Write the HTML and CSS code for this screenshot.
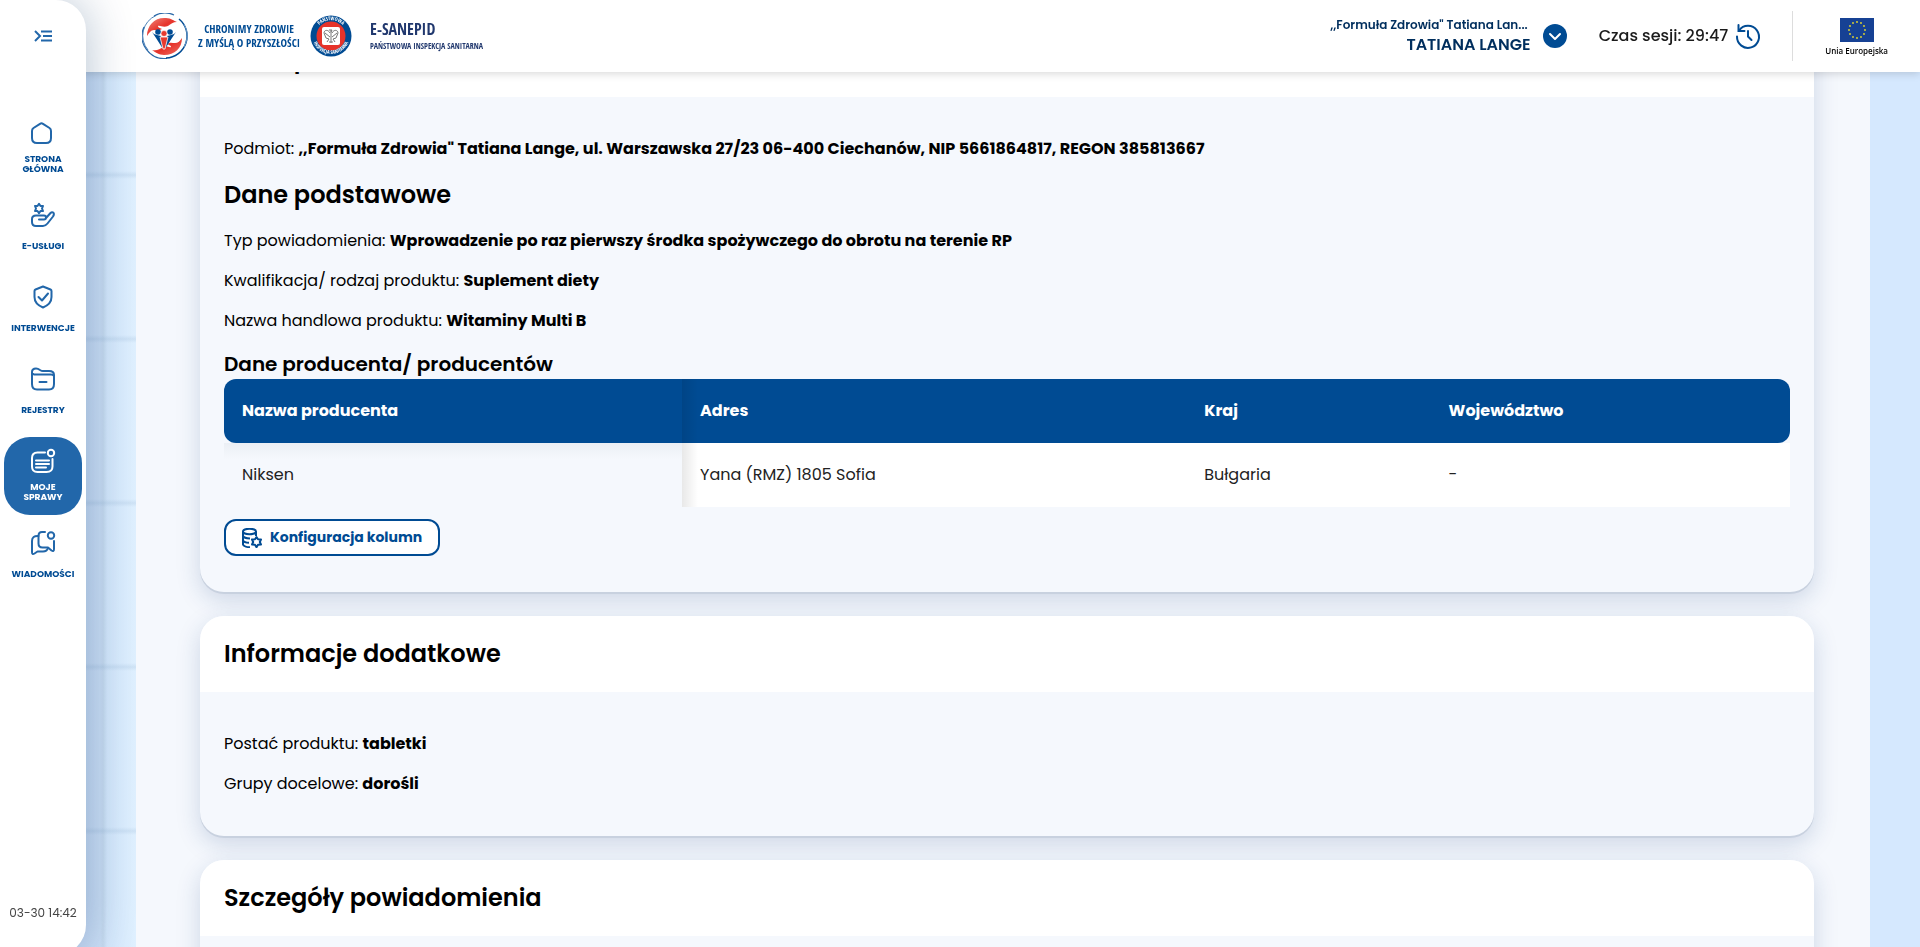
FILE: index.html
```html
<!DOCTYPE html>
<html lang="pl">

<head>
    <meta charset="UTF-8">
    <meta name="viewport" content="width=device-width, initial-scale=1.0">
    <title>E-SANEPID</title>
    <link rel="stylesheet" href="styles.css">
</head>

<body>
    <header class="topbar">
        <div class="brand">
            <svg class="brand-hands" viewBox="0 0 46 46" aria-hidden="true">
                <defs>
                    <linearGradient id="hand" x1="0" y1="0" x2="1" y2="1">
                        <stop offset="0" stop-color="#f08a80" />
                        <stop offset=".5" stop-color="#e6332a" />
                        <stop offset="1" stop-color="#ee7066" />
                    </linearGradient>
                </defs>
                <path d="M14 2.500A22 22 0 0 0 6 37" fill="none" stroke="#4d82b8" stroke-width="1" />
                <path d="M2 14A22.500 22.500 0 0 0 25 45.500" fill="none" stroke="#2b69a8" stroke-width="1.200" />
                <path d="M12 3A22 22 0 0 1 32 2" fill="none" stroke="#2b69a8" stroke-width="1.200" />
                <path d="M37 6A22 22 0 0 1 24 45" fill="none" stroke="#004b93" stroke-width="1.500" />
                <path d="M42 11A23 23 0 0 1 42 34" fill="none" stroke="#6d9bc9" stroke-width="1" />
                <path d="M5 23C5 12 13 4 24 5C29 5 32 8 35 9C31 9 29 11 26 13C21 15 18 12 16 13C16 15 19 15 20 16C17 18 15 17 12 17C9 17 7 20 5 23Z" fill="url(#hand)" />
                <path d="M40 25C40 35 33 42 22 42C17 42 13 39 10 37C15 38 18 36 21 34C25 32 27 35 29 34C29 32 26 32 25 31C28 29 30 30 33 30C36 30 38 28 40 25Z" fill="url(#hand)" />
                <circle cx="16" cy="19" r="2.800" fill="#004b93" />
                <circle cx="28" cy="19" r="2.800" fill="#004b93" />
                <path d="M10 19Q12 22 15 22L19 23L21 36L14 25Z" fill="#004b93" />
                <path d="M34 19Q32 22 29 22L25 23L23 36L30 25Z" fill="#004b93" />
                <circle cx="22" cy="20.500" r="3" fill="#e6392f" stroke="#fff" stroke-width=".6" />
                <path d="M18 24H26L23 36H21Z" fill="#e6392f" stroke="#fff" stroke-width=".8" />
            </svg>
            <p class="brand-slogan">CHRONIMY ZDROWIE<br>Z MYŚLĄ O PRZYSZŁOŚCI</p>
            <svg class="brand-seal" viewBox="0 0 42 42" aria-hidden="true">
                <defs>
                    <path id="seal-top" d="M5 21A16 16 0 0 1 37 21" />
                    <path id="seal-bottom" d="M2 20A19 19 0 0 0 40 20" />
                </defs>
                <circle cx="21" cy="21" r="20.500" fill="#004b93" />
                <circle cx="21" cy="21" r="14.500" fill="#e6332a" />
                <rect x="12" y="12" width="18" height="18" rx="2" fill="#fff" />
                <path d="M20 18C18 14 14 15 14 18L16 23L19 24L17 27M22 18C24 14 28 15 28 18L26 23L23 24L25 27M21 15V28M19 15H22L21 17M15 18L20 22M27 18L22 22M19 27H23" fill="none" stroke="#777" stroke-width="1" />
                <text class="seal-text"><textPath href="#seal-top" startOffset="50%" text-anchor="middle">PAŃSTWOWA</textPath></text>
                <text class="seal-text"><textPath href="#seal-bottom" startOffset="50%" text-anchor="middle">INSPEKCJA SANITARNA</textPath></text>
            </svg>
            <div class="brand-name">
                <strong>E-SANEPID</strong>
                <span>PAŃSTWOWA INSPEKCJA SANITARNA</span>
            </div>
        </div>

        <div class="topbar-right">
            <div class="account">
                <div class="account-text">
                    <span class="account-company">,,Formuła Zdrowia" Tatiana Lan...</span>
                    <span class="account-name">TATIANA LANGE</span>
                </div>
                <button class="account-toggle" type="button" aria-label="Zmień podmiot">
                    <svg viewBox="0 0 24 24"><path d="M7 10l5 5 5-5" /></svg>
                </button>
            </div>
            <div class="session">
                <span>Czas sesji: 29:47</span>
                <svg class="session-icon" viewBox="0 0 24 24" aria-hidden="true">
                    <path d="M2.500 1v6h6" />
                    <path d="M3 6.500A11 11 0 1 1 1 12.500" />
                    <path d="M12 7v5.500l3.500 3.500" />
                </svg>
            </div>
            <div class="eu">
                <svg class="eu-flag" viewBox="0 0 34 24" aria-hidden="true">
                    <rect width="34" height="24" fill="#164194" />
                    <g fill="#e8dc2a">
                        <circle cx="17" cy="4" r=".9" /><circle cx="21" cy="5" r=".9" />
                        <circle cx="24" cy="8" r=".9" /><circle cx="25" cy="12" r=".9" />
                        <circle cx="24" cy="16" r=".9" /><circle cx="21" cy="19" r=".9" />
                        <circle cx="17" cy="20" r=".9" /><circle cx="13" cy="19" r=".9" />
                        <circle cx="10" cy="16" r=".9" /><circle cx="9" cy="12" r=".9" />
                        <circle cx="10" cy="8" r=".9" /><circle cx="13" cy="5" r=".9" />
                    </g>
                </svg>
                <span>Unia Europejska</span>
            </div>
        </div>
    </header>

    <aside class="sidebar">
        <button class="sidebar-toggle" type="button" aria-label="Rozwiń menu">
            <svg viewBox="0 0 18 12"><path d="M1 1l5 5-5 5M7 1.500h11M9 6h9M7 10.500h11" /></svg>
        </button>
        <nav class="menu">
            <a class="menu-item" href="#">
                <svg class="menu-icon" viewBox="0 0 24 24"><path d="M1 10Q1 8 2.500 7L9 2.800Q10.500 1.800 12 2.800L18.500 7Q20 8 20 10V17Q20 22 15 22H6Q1 22 1 17Z" /></svg>
                <span class="menu-label">STRONA<br>GŁÓWNA</span>
            </a>
            <a class="menu-item" href="#">
                <svg class="menu-icon" viewBox="0 0 24 24">
                    <path d="M8 .8L9.500 3H12L11 5.500L12 8H9.500L8 10.200L6.500 8H4L5 5.500L4 3H6.500Z" />
                    <path d="M8 16.500H13Q15 16.500 15 14.500T13 12.500H5Q1 12.500 1 16V19Q1 23 5 23H12Q14.500 23 16.500 20.500L22 13.500Q23.500 11 22.500 9.800Q21 8.500 19.500 10L15 15" />
                </svg>
                <span class="menu-label">E-USŁUGI</span>
            </a>
            <a class="menu-item" href="#">
                <svg class="menu-icon" viewBox="0 0 24 24"><path d="M12 1.500L19.500 4.500Q20.500 5 20.500 6V12Q20.500 19 12 22.500Q3.500 19 3.500 12V6Q3.500 5 4.500 4.500Z" /><path d="M7.500 12l3.500 3.500 6-7" /></svg>
                <span class="menu-label">INTERWENCJE</span>
            </a>
            <a class="menu-item" href="#">
                <svg class="menu-icon" viewBox="0 0 24 24"><path d="M1 8V5Q1 1.500 5 1.500Q7 1.500 9 3Q10.500 4 12 4H18Q23 4 23 8V17Q23 22.500 18 22.500H6Q1 22.500 1 17V8Q1 6 3 7.500H20Q22 7.500 23 9M8.500 15h7" /></svg>
                <span class="menu-label">REJESTRY</span>
            </a>
            <a class="menu-item menu-item-active" href="#">
                <svg class="menu-icon" viewBox="0 0 24 24"><path d="M14 3.500H6.500Q1 3.500 1 9V17.500Q1 23 6.500 23H15.500Q21.500 23 21.500 17.500V10M5 11.500h13M5 15h13M5 18.500h10" /><circle cx="20" cy="4" r="3.200" /></svg>
                <span class="menu-label">MOJE<br>SPRAWY</span>
            </a>
            <a class="menu-item" href="#">
                <svg class="menu-icon" viewBox="0 0 24 24"><path d="M14 1H11Q7.500 1 7.500 5V12.500Q7.500 16.500 11.500 16.500H17L20.500 19.500Q23 21 23 18V10" /><path d="M7.500 5Q1 4.500 1 10V21Q1 24 3.500 22.500L6.500 20.500H12Q16 20.500 17 17" /><circle cx="20" cy="4.500" r="3.200" /></svg>
                <span class="menu-label">WIADOMOŚCI</span>
            </a>
        </nav>
        <time class="sidebar-time">03-30 14:42</time>
    </aside>

    <main class="panel">
        <section class="card">
            <h2 class="card-title">Dane podstawowe</h2>
            <div class="card-body card-body-table">
                <p>Podmiot: <strong>,,Formuła Zdrowia" Tatiana Lange, ul. Warszawska 27/23 06-400 Ciechanów, NIP 5661864817, REGON 385813667</strong></p>
                <h3>Dane podstawowe</h3>
                <p>Typ powiadomienia: <strong>Wprowadzenie po raz pierwszy środka spożywczego do obrotu na terenie RP</strong></p>
                <p>Kwalifikacja/ rodzaj produktu: <strong>Suplement diety</strong></p>
                <p>Nazwa handlowa produktu: <strong>Witaminy Multi B</strong></p>
                <h4>Dane producenta/ producentów</h4>
                <table class="producers">
                    <thead>
                        <tr>
                            <th class="col-name">Nazwa producenta</th>
                            <th class="col-address">Adres</th>
                            <th class="col-country">Kraj</th>
                            <th>Województwo</th>
                        </tr>
                    </thead>
                    <tbody>
                        <tr>
                            <td>Niksen</td>
                            <td>Yana (RMZ) 1805 Sofia</td>
                            <td>Bułgaria</td>
                            <td>-</td>
                        </tr>
                    </tbody>
                </table>
                <button class="btn-columns" type="button">
                    <svg viewBox="0 0 20 20" aria-hidden="true">
                        <ellipse cx="7.500" cy="3.500" rx="6.500" ry="2.700" />
                        <path d="M1 3.500V16.500Q2 19 8 19.200M14 3.500V8M1 8Q2 10.200 8 10.500M1 12.300Q2 14.500 7 14.800" />
                        <path d="M14.500 9L16 11.300L19 11.500L17.800 14L19 16.500L16 16.800L14.500 19.200L13 16.800L10 16.500L11.200 14L10 11.500L13 11.300Z" />
                    </svg>
                    Konfiguracja kolumn
                </button>
            </div>
        </section>

        <section class="card">
            <h2 class="card-title">Informacje dodatkowe</h2>
            <div class="card-body">
                <p>Postać produktu: <strong>tabletki</strong></p>
                <p>Grupy docelowe: <strong>dorośli</strong></p>
            </div>
        </section>

        <section class="card">
            <h2 class="card-title">Szczegóły powiadomienia</h2>
            <div class="card-body"></div>
        </section>
    </main>
</body>

</html>
```
FILE: styles.css
```css
* {
    box-sizing: border-box;
}

body {
    margin: 0;
    height: 100vh;
    overflow: hidden;
    font-family: "Poppins", "Inter", sans-serif;
    font-size: 16px;
    line-height: 24px;
    color: #000;
    background:
        repeating-linear-gradient(to bottom, transparent 0 156px, rgba(130, 165, 200, 0.18) 160px, transparent 164px) 0 15px / 136px 100% no-repeat,
        linear-gradient(to right, #c9dcf5 86px, #cbdff6 100px, #c6daef 103px, #d3e7fb 107px, #dff0ff 136px, #d5e8fe 137px);
}

p,
h2,
h3,
h4 {
    margin: 0;
}

button {
    font-family: inherit;
    cursor: pointer;
}

svg {
    display: block;
}

/* top bar */
.topbar {
    position: fixed;
    top: 0;
    left: 0;
    right: 0;
    z-index: 2;
    display: flex;
    align-items: center;
    justify-content: space-between;
    height: 72px;
    padding: 0 32px 0 142px;
    background: #fff;
    box-shadow: 0 2px 8px rgba(0, 0, 0, 0.15);
}

.brand {
    display: flex;
    align-items: center;
    color: #004b93;
    font-family: "Liberation Sans Narrow", "Open Sans Condensed", "Roboto Condensed", "Liberation Sans", sans-serif;
}

.brand-hands {
    width: 46px;
    height: 46px;
}

.brand-slogan {
    margin: 0 10px;
    font-size: 11px;
    font-weight: bold;
    line-height: 14px;
    text-align: center;
    white-space: nowrap;
}

.brand-seal {
    width: 42px;
    height: 42px;
    margin-right: 18px;
}

.seal-text {
    font-size: 5px;
    font-weight: bold;
    fill: #fff;
}

.brand-name {
    display: flex;
    flex-direction: column;
    color: #21386e;
    white-space: nowrap;
}

.brand-name strong {
    font-size: 16px;
    line-height: 20px;
}

.brand-name span {
    font-size: 8px;
    line-height: 14px;
}

.topbar-right {
    display: flex;
    align-items: center;
}

.account {
    display: flex;
    align-items: center;
    gap: 12px;
    margin-right: 32px;
    color: #002e5d;
    font-weight: 600;
}

.account-text {
    display: flex;
    flex-direction: column;
    align-items: flex-end;
}

.account-company {
    padding-right: 3px;
    font-size: 12px;
    line-height: 18px;
    white-space: nowrap;
}

.account-name {
    font-size: 16px;
    line-height: 22px;
}

.account-toggle {
    width: 24px;
    height: 24px;
    padding: 0;
    border: none;
    border-radius: 50%;
    background: #004b93;
}

.account-toggle svg {
    fill: none;
    stroke: #fff;
    stroke-width: 2;
    stroke-linecap: round;
    stroke-linejoin: round;
}

.session {
    display: flex;
    align-items: center;
    gap: 8px;
    color: #1b1b1b;
    font-weight: 500;
}

.session-icon {
    width: 24px;
    height: 24px;
    overflow: visible;
    fill: none;
    stroke: #004b93;
    stroke-width: 2;
    stroke-linecap: round;
}

.eu {
    display: flex;
    flex-direction: column;
    align-items: center;
    justify-content: center;
    height: 50px;
    margin-left: 32px;
    padding: 6px 0 0 32px;
    border-left: 1px solid #ddd;
    font-family: "Open Sans", sans-serif;
    font-size: 8px;
    font-weight: 600;
    line-height: 18px;
}

.eu-flag {
    width: 34px;
    height: 24px;
}

/* side menu */
.sidebar {
    position: fixed;
    top: 0;
    left: 0;
    bottom: -8px;
    z-index: 3;
    display: flex;
    flex-direction: column;
    align-items: center;
    width: 86px;
    padding: 24px 4px 30px;
    border-radius: 0 30px 30px 0;
    background: #fff;
    box-shadow: 0 0 48px rgba(0, 50, 100, 0.3);
}

.sidebar-toggle {
    display: flex;
    align-items: center;
    justify-content: center;
    width: 24px;
    height: 24px;
    padding: 0;
    border: none;
    background: none;
}

.sidebar-toggle svg {
    width: 18px;
    height: 12px;
    fill: none;
    stroke: #2267aa;
    stroke-width: 2;
}

.menu {
    display: flex;
    flex-direction: column;
    gap: 4px;
    width: 100%;
    margin-top: 61px;
}

.menu-item {
    display: flex;
    flex-direction: column;
    align-items: center;
    gap: 9px;
    height: 78px;
    padding-top: 12px;
    border-radius: 26px;
    color: #004b93;
    text-decoration: none;
}

.menu-icon {
    width: 24px;
    height: 24px;
    overflow: visible;
    fill: none;
    stroke: #2267aa;
    stroke-width: 2;
    stroke-linecap: round;
    stroke-linejoin: round;
}

.menu-label {
    display: flex;
    align-items: center;
    height: 20px;
    font-size: 9px;
    font-weight: 700;
    line-height: 10px;
    text-align: center;
}

.menu-item-active {
    background: #2267aa;
    color: #fff;
}

.menu-item-active .menu-icon {
    stroke: #fff;
}

.sidebar-time {
    margin-top: auto;
    color: #444;
    font-size: 12px;
}

/* content */
.panel {
    display: flex;
    flex-direction: column;
    gap: 24px;
    height: 100%;
    overflow: hidden;
    margin: 0 50px 0 136px;
    padding: 21px 56px 0 64px;
    background: #f5f8fd;
}

.card {
    flex: none;
    border-radius: 24px;
    background: #f5f8fd;
    box-shadow: 0 2px 0 #c8d1df, 0 8px 24px rgba(20, 60, 120, 0.18);
}

.card-title {
    padding: 20px 24px;
    border-radius: 24px 24px 0 0;
    background: #fff;
    font-size: 24px;
    font-weight: 600;
    line-height: 36px;
}

.card-body {
    display: flex;
    flex-direction: column;
    align-items: flex-start;
    gap: 16px;
    padding: 40px 24px;
}

.card-body-table {
    padding-bottom: 36px;
}

.card-body strong {
    font-weight: 700;
}

.card-body h3 {
    font-size: 24px;
    font-weight: 600;
    line-height: 36px;
}

.card-body h4 {
    font-size: 20px;
    font-weight: 600;
    line-height: 30px;
}

.producers {
    width: 100%;
    margin-top: -16px;
    border-spacing: 0;
    table-layout: fixed;
}

.producers th,
.producers td {
    height: 64px;
    padding: 0 18px;
    text-align: left;
}

.producers th {
    background-color: #004b93;
    color: #fff;
    font-weight: 700;
}

.producers th:first-child {
    border-radius: 12px 0 0 12px;
}

.producers th:last-child {
    border-radius: 0 12px 12px 0;
}

.producers td {
    background-color: #fff;
    color: #222;
}

.producers td:first-child {
    background: linear-gradient(to bottom, #ebeff5, #f5f8fd 16px);
}

/* shadow thrown by the pinned first column */
.producers th:nth-child(2),
.producers td:nth-child(2) {
    background-image: linear-gradient(to right, rgba(0, 0, 0, 0.09), transparent 16px);
}

.col-name {
    width: 29.25%;
}

.col-address {
    width: 32.2%;
}

.col-country {
    width: 15.6%;
}

.btn-columns {
    display: flex;
    align-items: center;
    gap: 8px;
    height: 37px;
    margin-top: -4px;
    padding: 0 16px;
    border: 2px solid #004b93;
    border-radius: 12px;
    background: #fff;
    color: #004b93;
    font-size: 14px;
    font-weight: 700;
}

.btn-columns svg {
    width: 20px;
    height: 20px;
    fill: none;
    stroke: currentColor;
    stroke-width: 2;
    stroke-linejoin: round;
}
```
